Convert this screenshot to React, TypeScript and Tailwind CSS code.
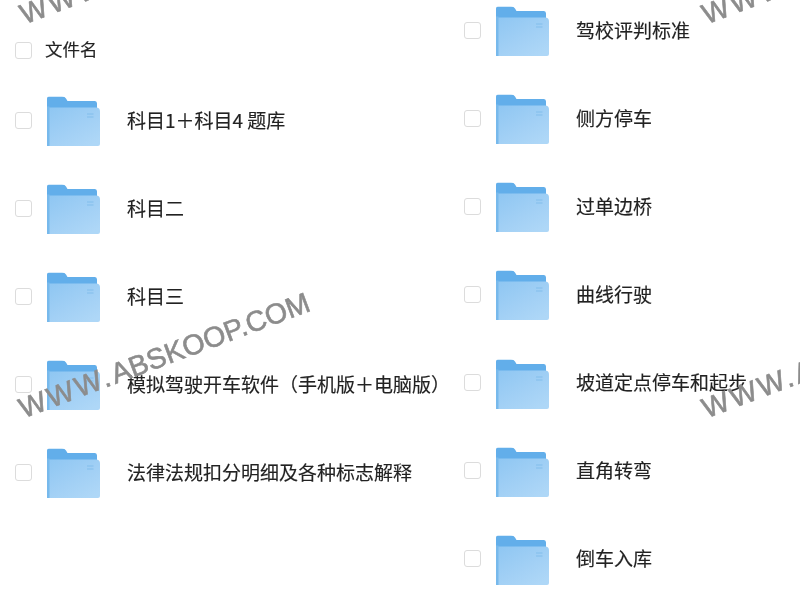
const left = ["科目1＋科目4 题库", "科目二", "科目三", "模拟驾驶开车软件（手机版＋电脑版）", "法律法规扣分明细及各种标志解释"];
const right = ["驾校评判标准", "侧方停车", "过单边桥", "曲线行驶", "坡道定点停车和起步", "直角转弯", "倒车入库"];

function Folder({ id }: { id: string }) {
  return (
    <svg width="53" height="50" viewBox="0 0 53 50" className="shrink-0 translate-y-[1.5px]">
      <defs>
        <linearGradient id={id} x1="0" y1="0" x2="0.8" y2="1">
          <stop offset="0" stopColor="#8ec6f2" />
          <stop offset="0.6" stopColor="#a2d0f5" />
          <stop offset="1" stopColor="#aed7f7" />
        </linearGradient>
      </defs>
      <path d="M0 2 Q0 0 2 0 H15 Q18 0 19 2 L20.5 4.5 H48 Q50 4.5 50 7 V20 H0 Z" fill="#62aeea" />
      <path d="M0 49.5 V11 H49 Q53 11 53 15 V47.5 Q53 49.5 51 49.5 Z" fill={`url(#${id})`} />
      <rect x="0" y="10" width="2.5" height="39.5" fill="#77b9ec" />
      <rect x="40" y="17" width="6.5" height="1" fill="#82bdec" />
      <rect x="40" y="20" width="6.5" height="1" fill="#82bdec" />
    </svg>
  );
}

function Row({ name, id }: { name: string; id: string }) {
  return (
    <div className="flex h-11 items-center">
      <span className="h-[17px] w-[17px] shrink-0 rounded-[3px] border border-[#dcdcdc] bg-white" />
      <span className="ml-[15px]"><Folder id={id} /></span>
      <span className="ml-[27px] -translate-y-[1px] whitespace-nowrap text-[19px] leading-none text-[#222] [-webkit-text-stroke:0.15px_#222]">{name}</span>
    </div>
  );
}

function Mark({ className }: { className: string }) {
  return (
    <div className={`absolute origin-left -rotate-[20.5deg] whitespace-nowrap font-['Liberation_Sans',sans-serif] text-[28.5px] leading-none text-[#8c8c8c] [-webkit-text-stroke:0.6px_#8c8c8c] ${className}`}>
      <span className="tracking-[2.75px]">WWW.</span>ABSKOOP.COM
    </div>
  );
}

export default function App() {
  return (
    <div className="relative h-[603px] w-[800px] overflow-hidden bg-white font-['Noto_Sans_CJK_SC',sans-serif] blur-[0.4px]">
      <div className="flex">
        <div className="w-[449px] pl-[15px] pt-[28px]">
          <div className="mb-[26px] flex h-11 items-center">
            <span className="h-[17px] w-[17px] rounded-[3px] border border-[#dcdcdc] bg-white" />
            <span className="ml-[13px] -translate-y-[1px] text-[17.5px] leading-none text-[#222] [-webkit-text-stroke:0.15px_#222]">文件名</span>
          </div>
          <div className="flex flex-col gap-[44px]">
            {left.map((n, i) => <Row key={n} name={n} id={`l${i}`} />)}
          </div>
        </div>
        <div className="flex-1 pl-[15px] pt-[8px]">
          <div className="flex flex-col gap-[44.15px]">
            {right.map((n, i) => <Row key={n} name={n} id={`r${i}`} />)}
          </div>
        </div>
      </div>
      <Mark className="left-[20px] top-[395px]" />
      <Mark className="left-[21px] top-[1px]" />
      <Mark className="left-[703px] top-[1px]" />
      <Mark className="left-[703px] top-[395px]" />
    </div>
  );
}
